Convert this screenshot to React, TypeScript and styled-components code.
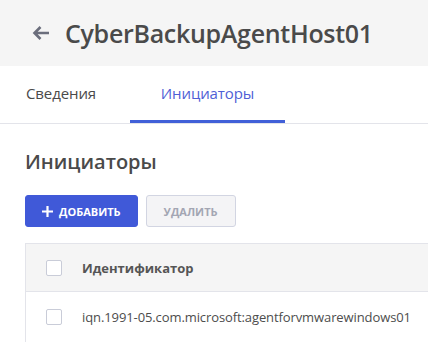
import styled, { createGlobalStyle } from "styled-components";

const Global = createGlobalStyle`
  body {
    margin: 0;
    background: #fff;
    font-family: "Open Sans", "Liberation Sans", sans-serif;
    color: #4a4a4a;
  }
`;

const Page = styled.div`
  width: 428px;
  height: 345px;
  overflow: hidden;
`;

const Header = styled.div`
  height: 66px;
  background: #f5f5f5;
  display: flex;
  align-items: center;
  padding-left: 32px;
  gap: 15px;
`;

const Title = styled.h1`
  margin: 0;
  font-size: 25px;
  font-weight: 600;
  color: #4a4a4a;
  letter-spacing: -0.3px;
`;

const Tabs = styled.div`
  display: flex;
  height: 57px;
  border-bottom: 1px solid #e3e4ea;
`;

const Tab = styled.div<{ $active?: boolean }>`
  display: flex;
  align-items: center;
  justify-content: center;
  width: ${(p) => (p.$active ? "155px" : "122px")};
  margin-left: ${(p) => (p.$active ? "8px" : "0")};
  font-size: 15px;
  letter-spacing: -0.1px;
  color: ${(p) => (p.$active ? "#4f5fd6" : "#4a4a4a")};
  border-bottom: 3px solid ${(p) => (p.$active ? "#4160d8" : "transparent")};
`;

const Content = styled.div`
  padding: 24px 0 0 25px;
`;

const Heading = styled.h2`
  margin: 0 0 20px;
  font-size: 20px;
  font-weight: 600;
  color: #4a4a4a;
`;

const Toolbar = styled.div`
  display: flex;
  gap: 8px;
  margin-bottom: 16px;
`;

const Button = styled.button<{ $primary?: boolean }>`
  height: 32px;
  display: flex;
  align-items: center;
  gap: 6px;
  padding: 0 ${(p) => (p.$primary ? "16px" : "17px")};
  border-radius: 3px;
  font-family: inherit;
  font-size: 11px;
  font-weight: 700;
  text-transform: uppercase;
  border: 1px solid ${(p) => (p.$primary ? "#4059d8" : "#d2d5e2")};
  background: ${(p) => (p.$primary ? "#4059d8" : "#f4f4f6")};
  color: ${(p) => (p.$primary ? "#fff" : "#a3a6b3")};
`;

const Table = styled.div`
  border: 1px solid #e3e4ea;
  border-right: none;
  border-bottom: none;
`;

const Row = styled.div<{ $head?: boolean }>`
  display: flex;
  align-items: center;
  gap: 20px;
  height: ${(p) => (p.$head ? "47px" : "50px")};
  padding-left: 20px;
  background: ${(p) => (p.$head ? "#f5f5f5" : "#fff")};
  border-bottom: ${(p) => (p.$head ? "1px solid #e3e4ea" : "none")};
  font-size: 13px;
  letter-spacing: ${(p) => (p.$head ? "0" : "-0.1px")};
  font-weight: ${(p) => (p.$head ? 700 : 400)};
  color: ${(p) => (p.$head ? "#555" : "#4d4d4d")};
`;

const Check = styled.span`
  width: 14px;
  height: 14px;
  border: 1px solid #c9ccd8;
  border-radius: 2px;
  background: #fff;
  flex-shrink: 0;
`;

const App = () => {
  return (
    <Page>
      <Global />
      <Header>
        <svg width="18" height="16" viewBox="0 0 18 16">
          <path
            d="M17 8H3M8.5 2L2.5 8l6 6"
            fill="none"
            stroke="#6b6e7c"
            strokeWidth="2.6"
          />
        </svg>
        <Title>CyberBackupAgentHost01</Title>
      </Header>
      <Tabs>
        <Tab>Сведения</Tab>
        <Tab $active>Инициаторы</Tab>
      </Tabs>
      <Content>
        <Heading>Инициаторы</Heading>
        <Toolbar>
          <Button $primary>
            <svg width="11" height="11" viewBox="0 0 11 11">
              <path d="M5.5 0v11M0 5.5h11" stroke="#fff" strokeWidth="2.2" />
            </svg>
            Добавить
          </Button>
          <Button>Удалить</Button>
        </Toolbar>
        <Table>
          <Row $head>
            <Check />
            Идентификатор
          </Row>
          <Row>
            <Check />
            iqn.1991-05.com.microsoft:agentforvmwarewindows01
          </Row>
        </Table>
      </Content>
    </Page>
  );
};

export default App;
